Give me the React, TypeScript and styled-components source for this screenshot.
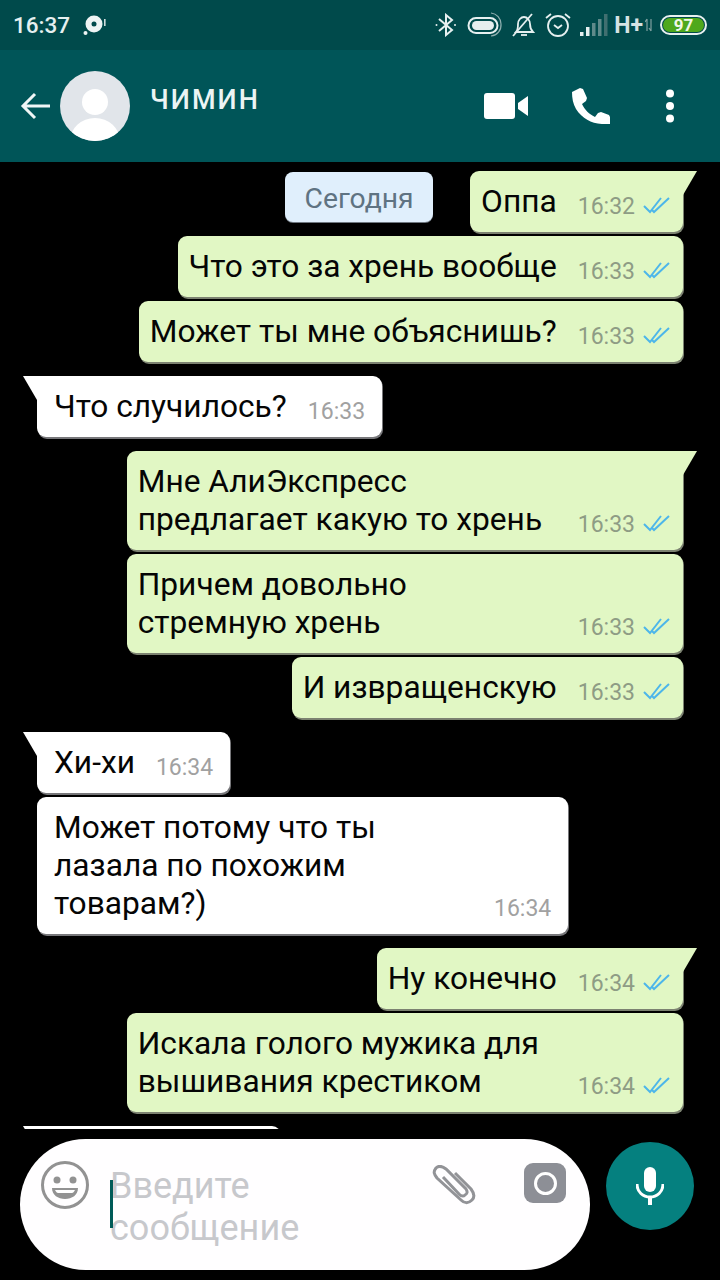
import styled, { createGlobalStyle } from "styled-components";

const GlobalStyle = createGlobalStyle`
  html, body {
    margin: 0;
    padding: 0;
    background: #000;
  }
  * {
    box-sizing: border-box;
  }
`;

const Page = styled.div`
  width: 720px;
  height: 1280px;
  display: flex;
  flex-direction: column;
  overflow: hidden;
  background: #000;
  font-family: Roboto, "Liberation Sans", sans-serif;
`;

const StatusBar = styled.div`
  height: 50px;
  flex: none;
  display: flex;
  align-items: center;
  padding: 0 13px;
  background: #004a4b;
  color: #e6f0f0;
`;

const Clock = styled.span`
  font-size: 22.5px;
  font-weight: 500;
  width: 70px;
`;

const StatusRight = styled.div`
  margin-left: auto;
  display: flex;
  align-items: center;
`;

const NetworkType = styled.span`
  font-size: 23px;
  font-weight: 700;
  margin: 0 2px 0 6px;
  color: #d5e3e3;
`;

const Battery = styled.span`
  width: 47px;
  height: 20px;
  margin-left: 7px;
  border: 2px solid #e8f0f0;
  border-radius: 10px;
  background: #4fa81c;
  background-clip: content-box;
  padding: 1px;
  color: #f2f7e8;
  font-size: 17px;
  font-weight: 700;
  line-height: 14px;
  text-align: center;
`;

const Header = styled.header`
  height: 112px;
  flex: none;
  display: flex;
  align-items: center;
  padding-left: 20px;
  background: #005558;
`;

const Avatar = styled.svg`
  width: 70px;
  height: 70px;
  flex: none;
  margin: -1px 0 0 10px;
`;

const ContactName = styled.div`
  align-self: flex-start;
  margin: 34px 0 0 20px;
  color: #ecf4f4;
  font-size: 27px;
  font-weight: 500;
  line-height: 32px;
  letter-spacing: 2.1px;
`;

const Actions = styled.div`
  margin-left: auto;
  display: flex;
  align-items: center;
  padding-right: 45px;
`;

const Messages = styled.main`
  height: 967px;
  flex: none;
  overflow: hidden;
  display: flex;
  flex-direction: column;
  gap: 4px;
  padding-top: 9px;
`;

const Row = styled.div<{ $incoming?: boolean; $tail?: boolean }>`
  display: flex;
  align-items: flex-start;
  justify-content: ${(p) => (p.$incoming ? "flex-start" : "flex-end")};
  gap: 37px;
  padding: ${(p) => (p.$incoming ? "0 0 0 37px" : "0 37px 0 0")};
  margin-top: ${(p) => (p.$tail ? "10px" : "0")};
  &:first-child {
    margin-top: 0;
  }
`;

const DatePill = styled.div`
  width: 148px;
  height: 50px;
  margin-top: 1px;
  border-radius: 8px;
  background: #e0effc;
  box-shadow: 0 1px 0 #6f7780;
  color: #5f7382;
  font-size: 28.3px;
  line-height: 53px;
  text-align: center;
`;

const Bubble = styled.div<{ $incoming?: boolean; $tail?: boolean }>`
  position: relative;
  display: flex;
  align-items: flex-end;
  gap: 21px;
  padding: 12px ${(p) => (p.$incoming ? "17px" : "13px")} 11px
    ${(p) => (p.$incoming ? "17px" : "11px")};
  border-radius: 9px;
  border-top-left-radius: ${(p) => (p.$incoming && p.$tail ? "0" : "9px")};
  border-top-right-radius: ${(p) => (!p.$incoming && p.$tail ? "0" : "9px")};
  background: ${(p) => (p.$incoming ? "#fff" : "#e1f7c4")};
  box-shadow: 1px 2px 0 ${(p) => (p.$incoming ? "#77777a" : "#7c8271")};

  ${(p) =>
    p.$tail &&
    `
    &::before {
      content: "";
      position: absolute;
      top: 0;
      ${p.$incoming ? "left: -14px;" : "right: -14px;"}
      width: 14px;
      height: 24px;
      background: ${p.$incoming ? "#fff" : "#e1f7c4"};
      clip-path: polygon(${
        p.$incoming ? "0 0, 100% 0, 100% 100%" : "0 0, 100% 0, 0 100%"
      });
    }
  `}
`;

const CutOffBubble = styled(Bubble)`
  width: 244px;
  height: 61px;
`;

const MessageText = styled.div`
  max-width: 419px;
  color: #050505;
  font-size: 31.7px;
  line-height: 38px;
`;

const Meta = styled.div`
  flex: none;
  display: flex;
  align-items: center;
  gap: 8px;
  height: 38px;
  padding-top: 8px;
`;

const Time = styled.span<{ $incoming?: boolean }>`
  color: ${(p) => (p.$incoming ? "#a1a1a1" : "#8e9c85")};
  font-size: 23px;
`;

const Footer = styled.footer`
  flex: 1;
  display: flex;
  align-items: flex-start;
  gap: 16px;
  padding: 10px 0 0 20px;
`;

const Composer = styled.div`
  position: relative;
  width: 570px;
  height: 131px;
  flex: none;
  display: flex;
  align-items: flex-start;
  padding: 22px 24px 0 21px;
  border-radius: 66px;
  background: #fffeff;
`;

const Placeholder = styled.div`
  width: 323px;
  margin: 4px 0 0 21px;
  color: #c7c8cc;
  font-size: 36px;
  line-height: 42px;
`;

const Caret = styled.span`
  position: absolute;
  left: 90px;
  top: 41px;
  width: 3px;
  height: 48px;
  background: #005b58;
`;

const ClipButton = styled.div`
  margin: 4px 48px 0 0;
  display: flex;
`;

const CameraButton = styled.div`
  position: relative;
  width: 42px;
  height: 40px;
  margin-top: 2px;
  display: flex;
  align-items: center;
  justify-content: center;
  border-radius: 9px;
  background: #8d8f96;
`;

const CameraLens = styled.span`
  width: 23px;
  height: 23px;
  border: 3px solid #fff;
  border-radius: 50%;
`;

const MicButton = styled.div`
  width: 88px;
  height: 88px;
  flex: none;
  margin-top: 3px;
  display: flex;
  align-items: center;
  justify-content: center;
  border-radius: 50%;
  background: #05807f;
`;

const CheckIcon = styled.svg`
  margin-top: -2px;
`;

const DoubleCheck = () => (
  <CheckIcon width="27" height="17" viewBox="0 0 27 17" fill="none" stroke="#4db6ea" strokeWidth="2">
    <path d="M1 9l6 6L18 1" />
    <path d="M9 13l2 2L26 1" />
  </CheckIcon>
);

type Message = {
  text: string;
  time: string;
  incoming?: boolean;
  tail?: boolean;
};

const messages: Message[] = [
  { text: "Что это за хрень вообще", time: "16:33" },
  { text: "Может ты мне объяснишь?", time: "16:33" },
  { text: "Что случилось?", time: "16:33", incoming: true, tail: true },
  { text: "Мне АлиЭкспресс предлагает какую то хрень", time: "16:33", tail: true },
  { text: "Причем довольно стремную хрень", time: "16:33" },
  { text: "И извращенскую", time: "16:33" },
  { text: "Хи-хи", time: "16:34", incoming: true, tail: true },
  { text: "Может потому что ты лазала по похожим товарам?)", time: "16:34", incoming: true },
  { text: "Ну конечно", time: "16:34", tail: true },
  { text: "Искала голого мужика для вышивания крестиком", time: "16:34" },
];

const MessageBubble = ({ text, time, incoming, tail }: Message) => (
  <Bubble $incoming={incoming} $tail={tail}>
    <MessageText>{text}</MessageText>
    <Meta>
      <Time $incoming={incoming}>{time}</Time>
      {!incoming && <DoubleCheck />}
    </Meta>
  </Bubble>
);

const DiscIcon = styled.svg`
  flex: none;
`;

const StatusIcon = styled.svg<{ $gap: number }>`
  margin-left: ${(p) => p.$gap}px;
`;

const SmileyIcon = styled.svg`
  flex: none;
`;

export default function App() {
  return (
    <Page>
      <GlobalStyle />
      <StatusBar>
        <Clock>16:37</Clock>
        <DiscIcon width="24" height="24" viewBox="0 0 24 24">
          <circle cx="11" cy="11" r="8.5" fill="#eef4f4" />
          <circle cx="11" cy="11" r="2.5" fill="#004a4b" />
          <circle cx="2.5" cy="20" r="2" fill="#eef4f4" />
          <rect x="21" y="6" width="1.6" height="7" fill="#cfdcdc" />
        </DiscIcon>
        <StatusRight>
          <svg width="22" height="24" viewBox="0 0 22 24" fill="none" stroke="#e6f0f0" strokeWidth="2">
            <path d="M4 6l13 11-6 5V2l6 5L4 18" />
            <circle cx="1.5" cy="12" r="1" fill="#e6f0f0" stroke="none" />
            <circle cx="20" cy="12" r="1" fill="#e6f0f0" stroke="none" />
          </svg>
          <StatusIcon $gap={10} width="36" height="26" viewBox="0 0 36 26" fill="none">
            <rect x="1.5" y="6" width="29" height="15" rx="7.5" stroke="#e6f0f0" strokeWidth="2" />
            <rect x="5" y="9" width="22" height="9" rx="4.5" fill="#e6eeee" />
            <path d="M24 1a11 11 0 0 1 10 11 11 11 0 0 1-10 12" stroke="#8fb0b0" strokeWidth="1.2" />
          </StatusIcon>
          <StatusIcon $gap={9} width="24" height="26" viewBox="0 0 24 26" fill="none" stroke="#e6f0f0" strokeWidth="1.8">
            <path d="M4 20c2-2 2-4 2-8 0-4 3-7 6-7s6 3 6 7c0 4 1 6 3 8z" />
            <path d="M9 23h6" />
            <path d="M1 24L20 2" />
          </StatusIcon>
          <StatusIcon $gap={9} width="26" height="26" viewBox="0 0 26 26" fill="none" stroke="#e6f0f0" strokeWidth="1.8">
            <circle cx="13" cy="14" r="10" />
            <path d="M9 13l4 3 4-3" />
            <path d="M1 6l5-4M25 6l-5-4" />
          </StatusIcon>
          <StatusIcon $gap={9} width="28" height="24" viewBox="0 0 28 24">
            <rect x="0" y="19" width="3.5" height="4" fill="#e6f0f0" />
            <rect x="6" y="14" width="3.5" height="9" fill="#e6f0f0" />
            <rect x="12" y="10" width="3.5" height="13" fill="#5f8a8a" />
            <rect x="18" y="6" width="3.5" height="17" fill="#5f8a8a" />
            <rect x="24" y="1" width="3.5" height="22" fill="#406f70" />
          </StatusIcon>
          <NetworkType>H+</NetworkType>
          <svg width="8" height="14" viewBox="0 0 8 14" stroke="#7fa0a0" strokeWidth="1.2" fill="none">
            <path d="M2 1v12M0 4l2-3M6 13V1M4 10l2 3" />
          </svg>
          <Battery>97</Battery>
        </StatusRight>
      </StatusBar>
      <Header>
        <svg width="30" height="28" viewBox="0 0 30 28" fill="none" stroke="#f0f6f6" strokeWidth="3">
          <path d="M30 14H3M15 2L3 14l12 12" />
        </svg>
        <Avatar viewBox="0 0 70 70">
          <clipPath id="avatar-clip">
            <circle cx="35" cy="35" r="35" />
          </clipPath>
          <circle cx="35" cy="35" r="35" fill="#e1e5ea" />
          <circle cx="35" cy="31" r="13" fill="#fff" />
          <ellipse cx="35" cy="70" rx="25" ry="23" fill="#fff" clipPath="url(#avatar-clip)" />
        </Avatar>
        <ContactName>ЧИМИН</ContactName>
        <Actions>
          <svg width="44" height="26" viewBox="0 0 44 26" fill="#fff">
            <rect width="31" height="26" rx="3" />
            <path d="M34 10l10-7v20l-10-7z" />
          </svg>
          <StatusIcon $gap={44} width="38" height="36" viewBox="0 0 38 36" fill="#fff">
            <path d="M0 4l8-4 3 1 4 9-1 3-4 3c3 6 7 10 13 13l3-4 3-1 8 3 1 2v7c-15 1-26-3-34-15C1 16 0 10 0 4z" />
          </StatusIcon>
          <StatusIcon $gap={55} width="10" height="34" viewBox="0 0 10 34" fill="#fff">
            <circle cx="5" cy="4.5" r="4" />
            <circle cx="5" cy="17" r="4" />
            <circle cx="5" cy="29.5" r="4" />
          </StatusIcon>
        </Actions>
      </Header>
      <Messages>
        <Row>
          <DatePill>Сегодня</DatePill>
          <MessageBubble text="Оппа" time="16:32" tail />
        </Row>
        {messages.map((m) => (
          <Row key={m.text} $incoming={m.incoming} $tail={m.tail}>
            <MessageBubble {...m} />
          </Row>
        ))}
        <Row $incoming $tail>
          <CutOffBubble $incoming $tail />
        </Row>
      </Messages>
      <Footer>
        <Composer>
          <SmileyIcon width="48" height="48" viewBox="0 0 48 48" fill="none">
            <circle cx="24" cy="24" r="22.5" stroke="#929292" strokeWidth="3" />
            <circle cx="16" cy="19" r="3.5" fill="#929292" />
            <circle cx="32" cy="19" r="3.5" fill="#929292" />
            <path d="M11 27h26c0 7-6 11-13 11s-13-4-13-11z" fill="#929292" />
            <path d="M14 29h20c-1 2-2 3-3 3H17c-1 0-2-1-3-3z" fill="#fff" />
          </SmileyIcon>
          <Placeholder>Введите сообщение</Placeholder>
          <Caret />
          <ClipButton>
            <svg width="44" height="40" viewBox="0 0 44 40" fill="none" stroke="#929397" strokeWidth="3">
              <path d="M23 8l16 16c3 4 4 8 1 11-4 4-8 3-11 0L5 13C2 9 1 7 4 3c3-3 6-2 10 1l20 20c2 3 1 5-1 6-2 2-4 1-6-1L11 12" />
            </svg>
          </ClipButton>
          <CameraButton>
            <CameraLens />
          </CameraButton>
        </Composer>
        <MicButton>
          <svg width="28" height="38" viewBox="0 0 28 38" fill="none">
            <rect x="8" y="0" width="12" height="25" rx="6" fill="#fff" />
            <path d="M1 17c0 8 6 13 13 13s13-5 13-13" stroke="#fff" strokeWidth="3" />
            <rect x="12" y="29" width="4" height="9" fill="#fff" />
          </svg>
        </MicButton>
      </Footer>
    </Page>
  );
}
